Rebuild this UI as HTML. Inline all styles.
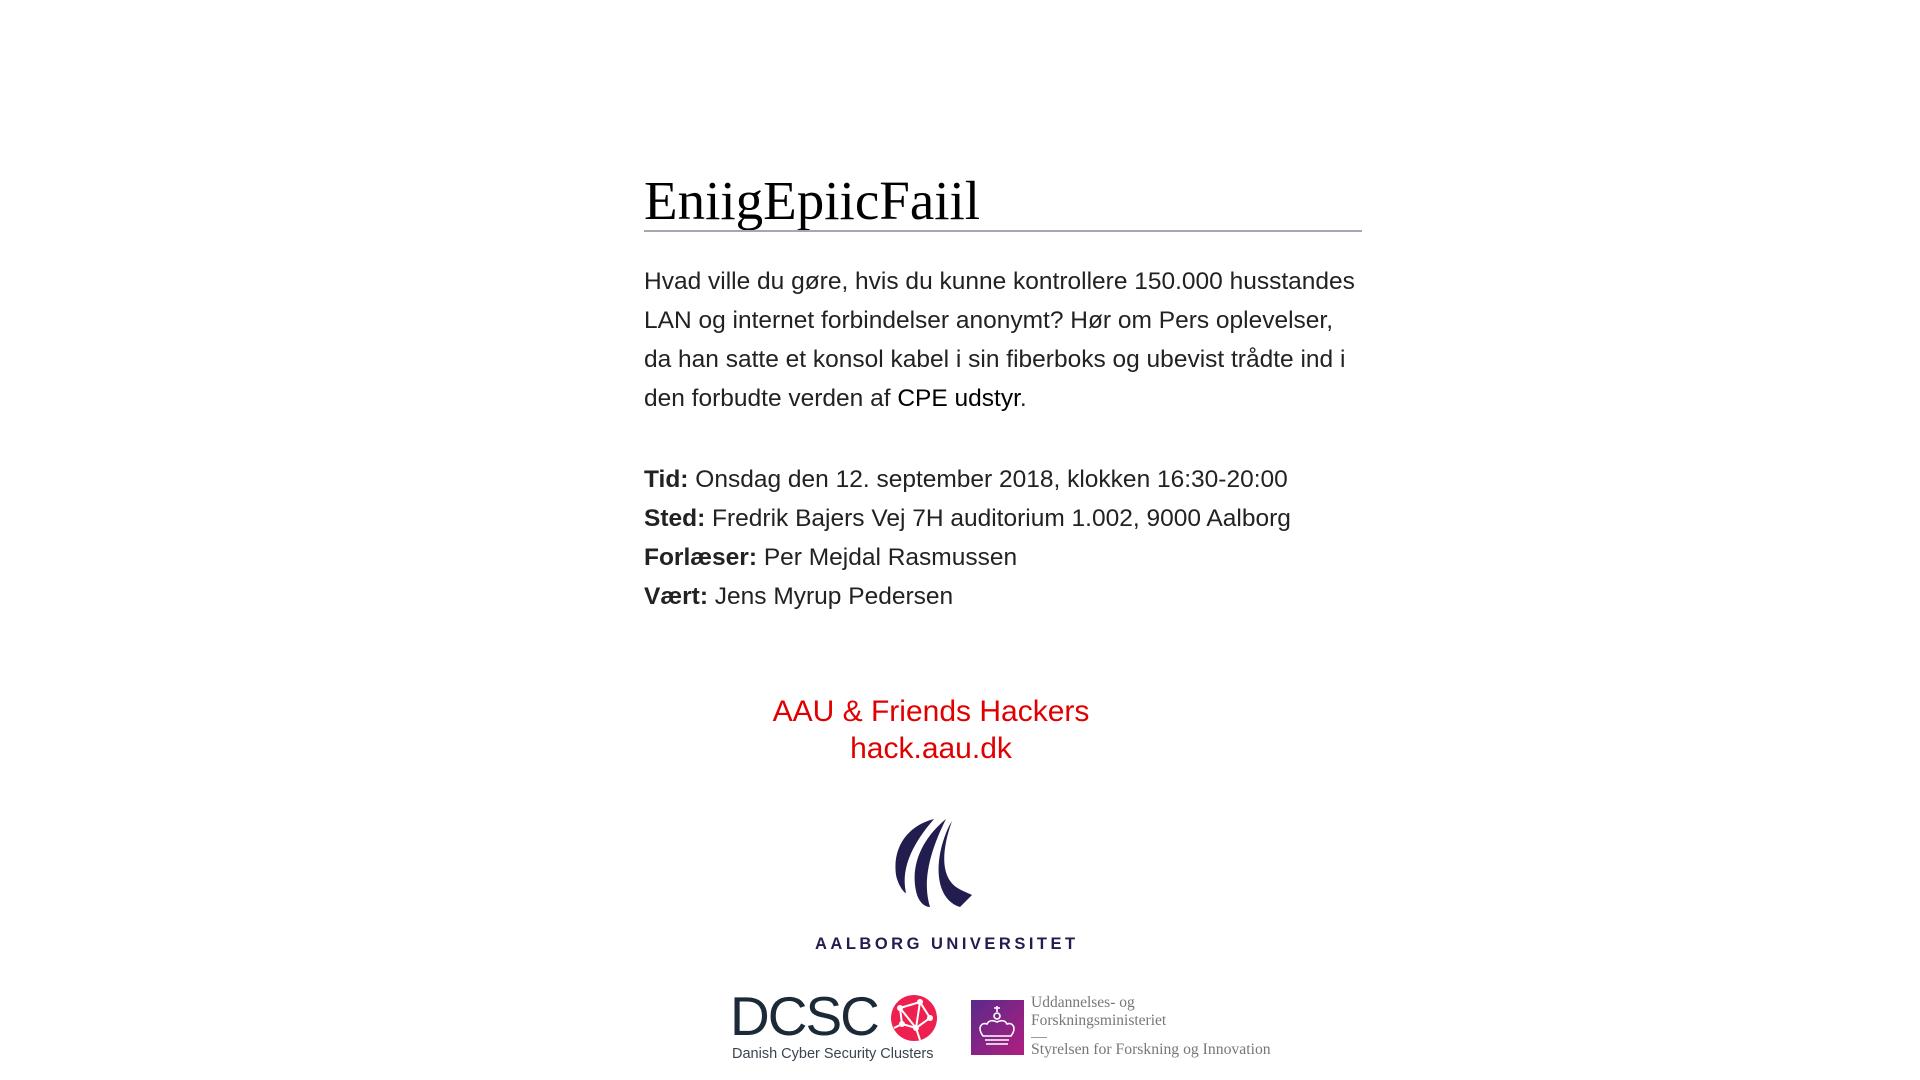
<!DOCTYPE html>
<html><head><meta charset="utf-8"><style>
html,body{margin:0;padding:0;background:#fff;width:1920px;height:1080px;overflow:hidden;position:relative}
.a{position:absolute;white-space:nowrap}
.s{font-family:"Liberation Sans",Arial,sans-serif}
h1{position:absolute;left:644px;top:166px;margin:0;font-family:"Liberation Serif",Georgia,serif;font-weight:normal;font-size:55px;line-height:70px;color:#000}
.rule{position:absolute;left:644px;top:230px;width:718px;height:2px;background:#a2a9b1}
.p{position:absolute;left:644px;font-family:"Liberation Sans",Arial,sans-serif;font-size:24.5px;color:#222;line-height:39px;white-space:nowrap}
.p b{color:#222}
.red{color:#e00000;font-size:30px;text-align:center;width:400px;left:731px}
</style></head><body>
<h1>EniigEpiicFaiil</h1>
<div class="rule"></div>
<div class="p" style="top:262px">Hvad ville du gøre, hvis du kunne kontrollere 150.000 husstandes<br>LAN og internet forbindelser anonymt? Hør om Pers oplevelser,<br>da han satte et konsol kabel i sin fiberboks og ubevist trådte ind i<br>den forbudte verden af <span style="color:#000">CPE udstyr</span>.</div>
<div class="p" style="top:460px"><b>Tid:</b> Onsdag den 12. september 2018, klokken 16:30-20:00<br><b>Sted:</b> Fredrik Bajers Vej 7H auditorium 1.002, 9000 Aalborg<br><b>Forlæser:</b> Per Mejdal Rasmussen<br><b>Vært:</b> Jens Myrup Pedersen</div>
<div class="a s red" style="top:695px">AAU &amp; Friends Hackers</div>
<div class="a s red" style="top:732px">hack.aau.dk</div>
<svg class="a" style="left:890px;top:815px" width="95" height="95" viewBox="0 0 95 95">
<path d="M44 4 C20 10 2 30 6 60 C8 70 14 78 16 78 C12 60 16 36 44 4Z" fill="#211d4e"/>
<path d="M56 4 C34 22 20 48 26 76 C28 86 34 92 40 92 C32 66 40 36 56 4Z" fill="#211d4e"/>
<path d="M62 6 C52 34 50 60 66 72 C72 76 78 78 82 80 L70 92 C50 86 44 60 52 30 C55 20 58 12 62 6Z" fill="#211d4e"/>
</svg>
<div class="a s" style="left:815px;top:935px;font-size:16.5px;font-weight:bold;letter-spacing:3.5px;color:#211d4e">AALBORG UNIVERSITET</div>
<div class="a s" style="left:730px;top:986px;font-size:55px;line-height:60px;color:#1c2a38;font-weight:normal;letter-spacing:-2px">DCSC</div>
<svg class="a" style="left:890px;top:994px" width="48" height="48" viewBox="0 0 48 48">
<circle cx="24" cy="24" r="23" fill="#ee2050"/>
<g stroke="#fff" stroke-width="2" fill="none"><path d="M10 14 L30 8 L40 24 L26 34 L12 30 Z M30 8 L26 34 M10 14 L26 34 M26 34 L30 46 M12 30 L4 34"/></g>
<g fill="#fff"><circle cx="10" cy="14" r="3"/><circle cx="30" cy="8" r="3"/><circle cx="40" cy="24" r="3"/><circle cx="26" cy="34" r="3"/><circle cx="12" cy="30" r="3"/></g>
</svg>
<div class="a s" style="left:732px;top:1046px;font-size:14.5px;color:#3a4450">Danish Cyber Security Clusters</div>
<svg class="a" style="left:971px;top:1000px" width="53" height="55" viewBox="0 0 53 55">
<defs><linearGradient id="g" x1="0" y1="0" x2="1" y2="1"><stop offset="0" stop-color="#5a2a8a"/><stop offset="1" stop-color="#b01e80"/></linearGradient></defs>
<rect width="53" height="55" fill="url(#g)"/>
<g stroke="#fff" stroke-width="1.6" fill="none"><path d="M26 6v6M23 8h6"/><circle cx="26" cy="16" r="3"/><path d="M12 36 C6 28 10 22 16 24 C18 20 22 20 26 22 C30 20 34 20 36 24 C42 22 46 28 40 36 Z"/><path d="M14 40h24M15 44h22"/></g>
</svg>
<div class="a" style="left:1031px;top:994px;font-family:'Liberation Serif',serif;font-size:15.5px;color:#777;line-height:18px">Uddannelses- og<br>Forskningsministeriet</div>
<div class="a" style="left:1031px;top:1037px;width:16px;height:1px;background:#999"></div>
<div class="a" style="left:1031px;top:1041px;font-family:'Liberation Serif',serif;font-size:15.7px;color:#777">Styrelsen for Forskning og Innovation</div>
</body></html>
